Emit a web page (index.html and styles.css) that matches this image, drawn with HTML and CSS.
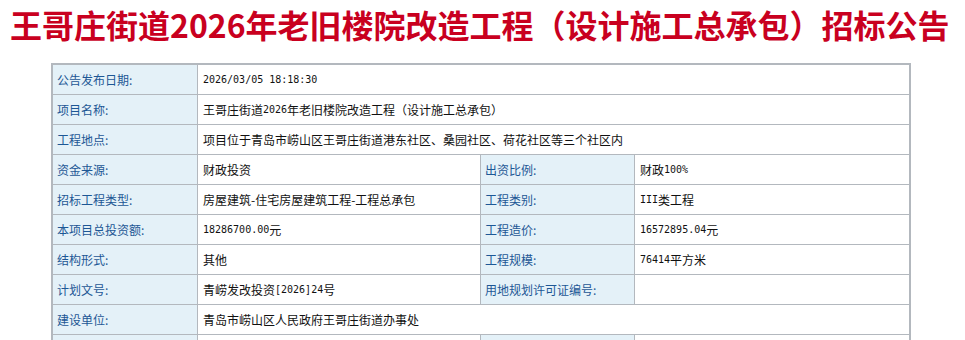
FILE: index.html
```html
<!DOCTYPE html>
<html lang="zh-CN">
<head>
<meta charset="utf-8">
<title>招标公告</title>
<link rel="stylesheet" href="styles.css">
</head>
<body>
<h1 class="title">王哥庄街道2026年老旧楼院改造工程（设计施工总承包）招标公告</h1>
<div class="info">
  <div class="lab">公告发布日期:</div>
  <div class="val span3"><span class="num">2026/03/05 18:18:30</span></div>

  <div class="lab">项目名称:</div>
  <div class="val span3">王哥庄街道<span class="num">2026</span>年老旧楼院改造工程（设计施工总承包）</div>

  <div class="lab">工程地点:</div>
  <div class="val span3">项目位于青岛市崂山区王哥庄街道港东社区、桑园社区、荷花社区等三个社区内</div>

  <div class="lab">资金来源:</div>
  <div class="val">财政投资</div>
  <div class="lab">出资比例:</div>
  <div class="val">财政<span class="num">100%</span></div>

  <div class="lab">招标工程类型:</div>
  <div class="val">房屋建筑-住宅房屋建筑工程-工程总承包</div>
  <div class="lab">工程类别:</div>
  <div class="val"><span class="num">III</span>类工程</div>

  <div class="lab">本项目总投资额:</div>
  <div class="val"><span class="num">18286700.00</span>元</div>
  <div class="lab">工程造价:</div>
  <div class="val"><span class="num">16572895.04</span>元</div>

  <div class="lab">结构形式:</div>
  <div class="val">其他</div>
  <div class="lab">工程规模:</div>
  <div class="val"><span class="num">76414</span>平方米</div>

  <div class="lab">计划文号:</div>
  <div class="val">青崂发改投资<span class="num">[2026]24</span>号</div>
  <div class="lab">用地规划许可证编号:</div>
  <div class="val"></div>

  <div class="lab">建设单位:</div>
  <div class="val span3">青岛市崂山区人民政府王哥庄街道办事处</div>

  <div class="lab">&nbsp;</div>
  <div class="val">&nbsp;</div>
  <div class="lab">&nbsp;</div>
  <div class="val">&nbsp;</div>
</div>
</body>
</html>
```
FILE: styles.css
```css
html, body {
  margin: 0;
  padding: 0;
  background: #ffffff;
}
body {
  font-family: "Noto Sans CJK SC", "Noto Sans", sans-serif;
}
.title {
  margin: 0;
  padding-left: 10px;
  font-size: 32px;
  line-height: 48px;
  font-weight: bold;
  color: #c9001f;
  white-space: nowrap;
  letter-spacing: 0;
}
.info {
  margin: 15px 0 0 51px;
  width: 856px;
  display: grid;
  grid-template-columns: 144px 282px 153px 274px;
  grid-auto-rows: 29px;
  gap: 1px;
  border: 2px solid #b3b8be;
  background: #b3b8be;
  font-size: 12px;
}
.lab, .val {
  display: flex;
  align-items: center;
  white-space: nowrap;
  overflow: hidden;
}
.lab {
  background: #e4f1f8;
  color: #1d5795;
  padding-left: 4px;
}
.val {
  background: #ffffff;
  color: #111111;
  padding-left: 5px;
}
.span3 {
  grid-column: span 3;
}
.num {
  font-family: "DejaVu Sans Mono", "Liberation Mono", monospace;
  font-size: 10px;
}
```
